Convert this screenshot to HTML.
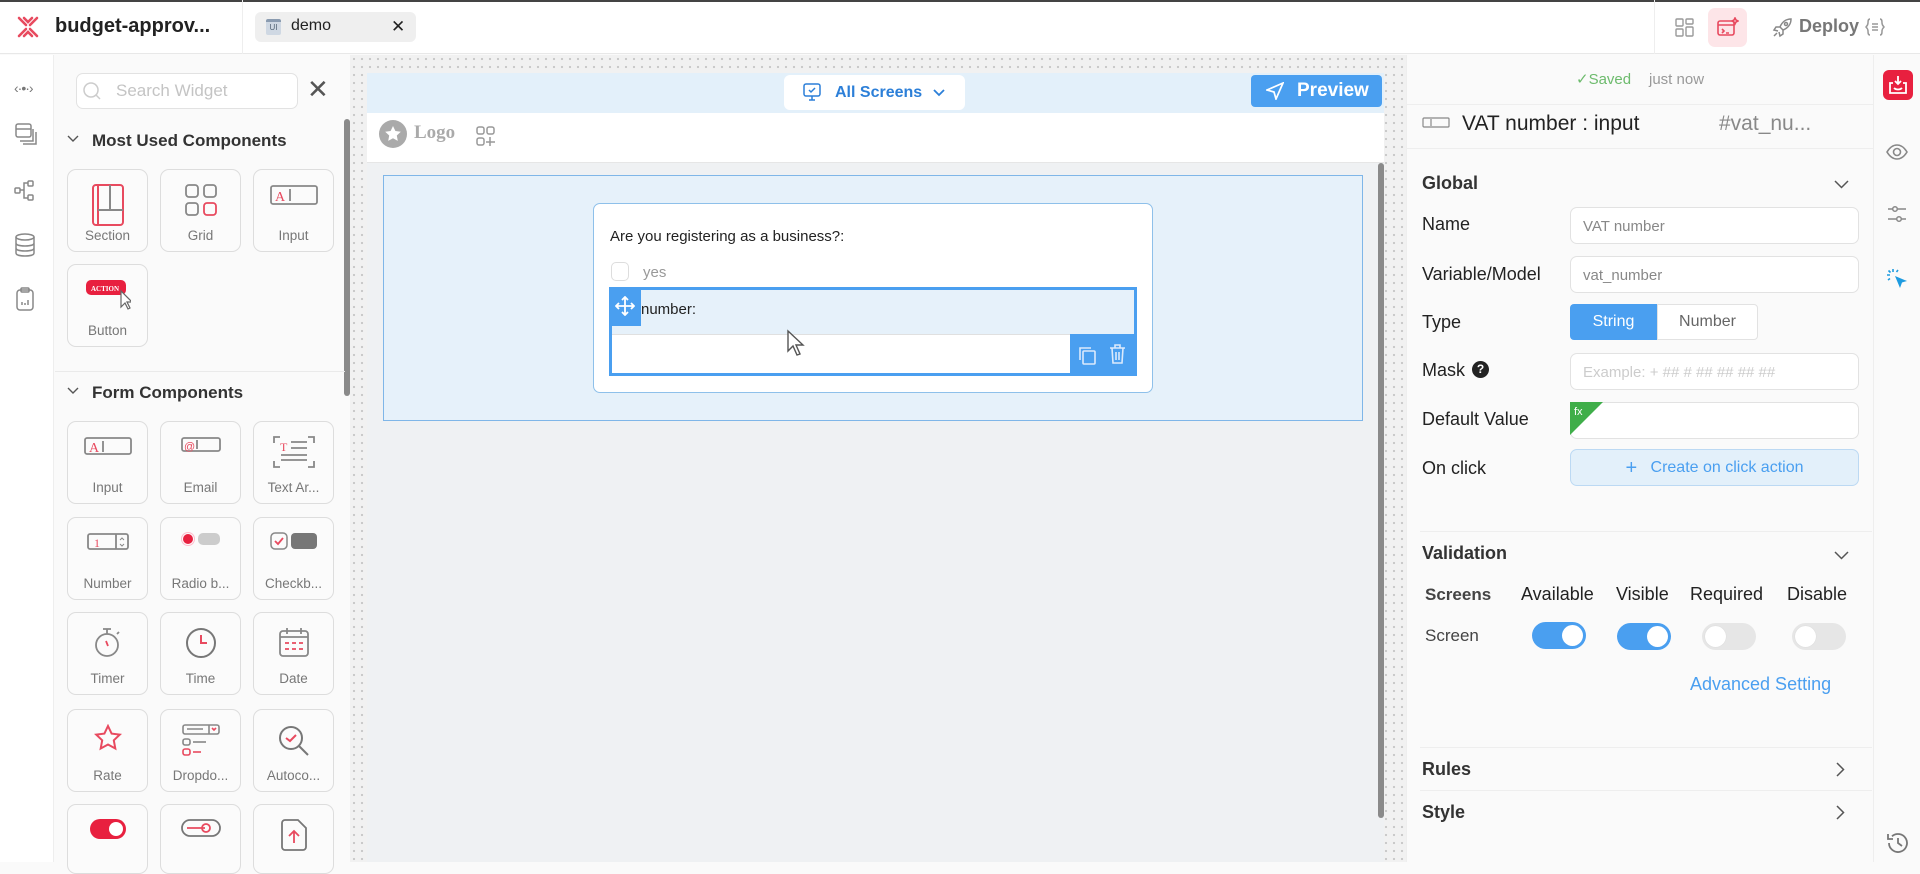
<!DOCTYPE html>
<html><head><meta charset="utf-8"><style>
*{box-sizing:border-box;margin:0;padding:0}
body{width:1920px;height:862px;overflow:hidden;background:#fafafa;font-family:"Liberation Sans",sans-serif;color:#222;position:relative}
.a{position:absolute}
.card{position:absolute;width:81px;height:83px;border:1px solid #ddd;border-radius:9px;background:#fbfbfb}
.card svg{position:absolute;left:50%;top:14px;transform:translateX(-50%)}
.card span{position:absolute;left:0;right:0;top:58px;text-align:center;font-size:13.5px;color:#777;white-space:nowrap}
.lbl{position:absolute;left:1422px;font-size:18px;color:#222}
.inp{position:absolute;left:1570px;width:289px;height:37px;border:1px solid #e2e2e2;border-radius:7px;background:#fff;font-size:15px;color:#888;padding:10px 12px}
.tg{position:absolute;width:54px;height:27px;border-radius:14px}
.tg.on{background:#4a9ff0}.tg.off{background:#e6e6e6}
.tg i{position:absolute;top:3px;width:21px;height:21px;border-radius:50%;background:#fff}
.tg.on i{right:3px}.tg.off i{left:3px;box-shadow:0 0 1px #ccc}
.hd{position:absolute;left:1422px;font-size:18px;font-weight:bold;color:#333}
.hr{position:absolute;left:1420px;width:452px;height:1px;background:#eee}
</style></head><body>
<!-- top bar -->
<div class="a" style="left:0;top:0;width:1920px;height:54px;background:#fff;border-bottom:1px solid #e8e8e8;border-top:2px solid #444"></div>
<svg class="a" style="left:16px;top:15px" width="24" height="24" viewBox="0 0 24 24" fill="none" stroke="#e84a5f" stroke-width="2.6" stroke-linecap="round"><path d="M3 3l7 7M21 3l-7 7M3 21l7-7M21 21l-7-7M8 3l4 4 4-4M8 21l4-4 4 4"/></svg>
<div class="a" style="left:55px;top:15px;font-size:20px;font-weight:bold;color:#222">budget-approv...</div>
<div class="a" style="left:242px;top:0;width:1px;height:54px;background:#eee"></div>
<div class="a" style="left:255px;top:12px;width:161px;height:30px;background:#efefef;border-radius:6px"></div>
<div class="a" style="left:266px;top:19px;width:15px;height:16px;background:#cfd8e3;border-top:3px solid #8a9bb0;border-radius:2px;font-size:8px;color:#567;text-align:center;line-height:12px">UI</div>
<div class="a" style="left:291px;top:17px;font-size:16px;color:#222">demo</div>
<div class="a" style="left:391px;top:17px;font-size:17px;color:#222">✕</div>
<div class="a" style="left:1654px;top:0;width:1px;height:54px;background:#eee"></div>
<svg class="a" style="left:1675px;top:18px" width="19" height="19" viewBox="0 0 19 19" fill="none" stroke="#999" stroke-width="1.4"><rect x="1" y="1" width="7" height="7" rx="1"/><rect x="11" y="1" width="7" height="5" rx="1"/><rect x="1" y="11" width="7" height="7" rx="1"/><rect x="11" y="9" width="7" height="9" rx="1"/></svg>
<div class="a" style="left:1708px;top:8px;width:39px;height:39px;background:#fde5e8;border-radius:7px"></div>
<svg class="a" style="left:1717px;top:17px" width="22" height="20" viewBox="0 0 22 20" fill="none" stroke="#e84a5f" stroke-width="1.6"><rect x="1" y="4" width="16" height="14" rx="2"/><path d="M1 8h16M5 12l2 2-2 2M9 16h3"/><path d="M18 1l1 2 2 1-2 1-1 2-1-2-2-1 2-1z"/></svg>
<svg class="a" style="left:1772px;top:17px" width="21" height="21" viewBox="0 0 21 21" fill="none" stroke="#888" stroke-width="1.5"><path d="M19 2c-5 0-9 3-11 8l3 3c5-2 8-6 8-11zM8 10l-4 0-2 3 4 1M11 13l0 4-3 2-1-4M5 16l-3 3"/><circle cx="14" cy="7" r="1.5"/></svg>
<div class="a" style="left:1799px;top:16px;font-size:18px;font-weight:bold;color:#777">Deploy</div>
<svg class="a" style="left:1865px;top:17px" width="20" height="20" viewBox="0 0 20 20" fill="none" stroke="#999" stroke-width="1.5"><path d="M5 2C3 2 3 4 3 6s-2 4-2 4 2 2 2 4 0 4 2 4M15 2c2 0 2 2 2 4s2 4 2 4-2 2-2 4 0 4-2 4M7 7h6M7 10h6M7 13h6"/></svg>

<!-- left rail -->
<div class="a" style="left:0;top:55px;width:54px;height:807px;background:#fff;border-right:1px solid #eee"></div>
<div class="a" style="left:14px;top:80px;font-size:14px;color:#777;letter-spacing:-1px">‹·•·›</div>
<svg class="a" style="left:15px;top:123px" width="22" height="22" viewBox="0 0 22 22" fill="none" stroke="#888" stroke-width="1.5"><rect x="1" y="1" width="15" height="13" rx="2"/><path d="M1 6h15M5 18h13V6M8 21h13V9"/></svg>
<svg class="a" style="left:14px;top:180px" width="22" height="22" viewBox="0 0 22 22" fill="none" stroke="#888" stroke-width="1.5"><rect x="1" y="8" width="5" height="5" rx="1"/><rect x="14" y="1" width="5" height="5" rx="1"/><rect x="14" y="15" width="5" height="5" rx="1"/><path d="M6 10h4V3h4M10 10v8h4"/></svg>
<svg class="a" style="left:14px;top:233px" width="22" height="24" viewBox="0 0 22 24" fill="none" stroke="#888" stroke-width="1.5"><ellipse cx="11" cy="4" rx="9" ry="3"/><path d="M2 4v16c0 2 4 3 9 3s9-1 9-3V4M2 10c0 2 4 3 9 3s9-1 9-3M2 15c0 2 4 3 9 3s9-1 9-3"/></svg>
<svg class="a" style="left:16px;top:287px" width="18" height="24" viewBox="0 0 18 24" fill="none" stroke="#888" stroke-width="1.5"><rect x="1" y="3" width="16" height="20" rx="3"/><rect x="5" y="1" width="8" height="4" rx="1"/><path d="M6 18v-3M9 18v-2M12 18v-5"/></svg>

<!-- widget panel -->
<div class="a" style="left:55px;top:55px;width:295px;height:807px;background:#fafafa"></div>
<div class="a" style="left:76px;top:73px;width:222px;height:36px;border:1px solid #e2e2e2;border-radius:7px;background:#fff"></div>
<svg class="a" style="left:82px;top:81px" width="20" height="20" viewBox="0 0 20 20" fill="none" stroke="#ccc" stroke-width="1.5"><circle cx="9" cy="9" r="7"/><path d="M14 14l4 4"/></svg>
<div class="a" style="left:116px;top:81px;font-size:17px;color:#c4c4c4">Search Widget</div>
<div class="a" style="left:307px;top:74px;font-size:26px;color:#555;line-height:30px">✕</div>
<div class="a" style="left:344px;top:119px;width:6px;height:277px;background:#8a8a8a;border-radius:3px"></div>
<svg class="a" style="left:67px;top:135px" width="12" height="8" viewBox="0 0 12 8" fill="none" stroke="#555" stroke-width="1.4"><path d="M1 1l5 5 5-5"/></svg>
<div class="a" style="left:92px;top:131px;font-size:17px;font-weight:bold;color:#333">Most Used Components</div>

<div class="card" style="left:67px;top:169px"><svg width="32" height="42" viewBox="0 0 32 42" fill="none" stroke="#e84a5f" stroke-width="2"><rect x="1" y="1" width="30" height="40" rx="3"/><path d="M6 1v40M6 26h25M18 1v25" stroke="#e84a5f"/><path d="M18 1v25M6 26h25" stroke="#888"/></svg><span>Section</span></div>
<div class="card" style="left:160px;top:169px"><svg width="32" height="32" viewBox="0 0 32 32" fill="none" stroke-width="1.8"><rect x="1" y="1" width="12" height="12" rx="3" stroke="#888"/><rect x="19" y="1" width="12" height="12" rx="3" stroke="#888"/><rect x="1" y="19" width="12" height="12" rx="3" stroke="#888"/><rect x="19" y="19" width="12" height="12" rx="3" stroke="#e84a5f"/></svg><span>Grid</span></div>
<div class="card" style="left:253px;top:169px"><svg width="48" height="22" viewBox="0 0 48 22" fill="none" stroke="#888" stroke-width="1.8"><rect x="1" y="2" width="46" height="18" rx="2"/><text x="5" y="17" font-size="14" fill="#e84a5f" stroke="none" font-family="Liberation Serif">A</text><path d="M20 5v12"/></svg><span>Input</span></div>
<div class="card" style="left:67px;top:264px"><svg width="46" height="36" viewBox="0 0 46 36" fill="none"><rect x="1" y="1" width="40" height="15" rx="5" fill="#e8203f"/><text x="6" y="12" font-size="7" font-weight="bold" fill="#fff" font-family="Liberation Serif">ACTION</text><path d="M36 12l0 16 4-4 3 6 2-1-3-6 5 0z" fill="#fff" stroke="#666" stroke-width="1.2"/></svg><span>Button</span></div>

<div class="a" style="left:55px;top:371px;width:290px;height:1px;background:#eaeaea"></div>
<svg class="a" style="left:67px;top:387px" width="12" height="8" viewBox="0 0 12 8" fill="none" stroke="#555" stroke-width="1.4"><path d="M1 1l5 5 5-5"/></svg>
<div class="a" style="left:92px;top:383px;font-size:17px;font-weight:bold;color:#333">Form Components</div>

<div class="card" style="left:67px;top:421px"><svg width="48" height="22" viewBox="0 0 48 22" fill="none" stroke="#888" stroke-width="1.8"><rect x="1" y="2" width="46" height="16" rx="2"/><text x="5" y="16" font-size="14" fill="#e84a5f" stroke="none" font-family="Liberation Serif">A</text><path d="M19 5v11"/></svg><span>Input</span></div>
<div class="card" style="left:160px;top:421px"><svg width="40" height="18" viewBox="0 0 40 18" fill="none" stroke="#888" stroke-width="1.8"><rect x="1" y="2" width="38" height="13" rx="2"/><text x="3" y="14" font-size="11" fill="#e84a5f" stroke="none">@</text><path d="M16 4v9"/></svg><span>Email</span></div>
<div class="card" style="left:253px;top:421px"><svg width="42" height="32" viewBox="0 0 42 32" fill="none" stroke="#888" stroke-width="1.8"><path d="M1 7V1h6M35 1h6v6M1 25v6h6M35 31h6v-6M18 6h16M18 12h16M8 19h26M8 24h26"/><text x="7" y="15" font-size="12" fill="#e84a5f" stroke="none" font-family="Liberation Serif">T</text></svg><span>Text Ar...</span></div>

<div class="card" style="left:67px;top:517px"><svg width="42" height="20" viewBox="0 0 42 20" fill="none" stroke="#888" stroke-width="1.8"><rect x="1" y="2" width="40" height="15" rx="2"/><path d="M29 2v15"/><text x="7" y="15" font-size="12" fill="#e84a5f" stroke="none" font-family="Liberation Serif">1</text><path d="M33 8l2-2 2 2M33 12l2 2 2-2" stroke-width="1"/></svg><span>Number</span></div>
<div class="card" style="left:160px;top:517px"><svg width="40" height="14" viewBox="0 0 40 14"><circle cx="7" cy="7" r="5" fill="#e8203f"/><circle cx="7" cy="7" r="6.5" fill="none" stroke="#fbc" stroke-width="1"/><rect x="17" y="1" width="22" height="12" rx="5" fill="#ccc"/></svg><span>Radio b...</span></div>
<div class="card" style="left:253px;top:517px"><svg width="48" height="18" viewBox="0 0 48 18"><rect x="1" y="1" width="16" height="16" rx="4" fill="none" stroke="#888" stroke-width="1.5"/><path d="M5 9l3 3 5-6" fill="none" stroke="#e84a5f" stroke-width="1.8"/><rect x="21" y="1" width="26" height="16" rx="4" fill="#777"/></svg><span>Checkb...</span></div>

<div class="card" style="left:67px;top:612px"><svg width="28" height="32" viewBox="0 0 28 32" fill="none" stroke="#888" stroke-width="1.8"><circle cx="13" cy="18" r="11"/><path d="M9 2h8M13 2v5M23 7l2-2"/><path d="M12 14l2 5" stroke="#e84a5f"/></svg><span>Timer</span></div>
<div class="card" style="left:160px;top:612px"><svg width="32" height="32" viewBox="0 0 32 32" fill="none" stroke-width="2"><circle cx="16" cy="16" r="14" stroke="#777"/><path d="M16 8v8h6" stroke="#e84a5f"/></svg><span>Time</span></div>
<div class="card" style="left:253px;top:612px"><svg width="30" height="30" viewBox="0 0 30 30" fill="none" stroke="#888" stroke-width="1.8"><rect x="1" y="4" width="28" height="25" rx="3"/><path d="M1 10h28M8 1v6M22 1v6"/><path d="M6 16h4M13 16h4M20 16h4M6 22h4M13 22h4M20 22h4" stroke="#e84a5f"/></svg><span>Date</span></div>

<div class="card" style="left:67px;top:709px"><svg width="28" height="28" viewBox="0 0 28 28" fill="none" stroke="#e84a5f" stroke-width="2"><path d="M14 2l3.6 7.6 8.2 1-6 5.7 1.5 8.2L14 20.5l-7.3 4 1.5-8.2-6-5.7 8.2-1z"/></svg><span>Rate</span></div>
<div class="card" style="left:160px;top:709px"><svg width="38" height="34" viewBox="0 0 38 34" fill="none" stroke="#888" stroke-width="1.6"><rect x="1" y="1" width="36" height="9" rx="2"/><path d="M27 1v9M5 5h16"/><path d="M30 4l2 2 2-2" stroke="#e84a5f"/><rect x="1" y="15" width="7" height="6" rx="2"/><path d="M11 18h13"/><rect x="1" y="25" width="7" height="6" rx="2" stroke="#e84a5f"/><path d="M11 28h8" stroke="#e84a5f"/></svg><span>Dropdo...</span></div>
<div class="card" style="left:253px;top:709px"><svg width="34" height="34" viewBox="0 0 34 34" fill="none" stroke-width="2"><circle cx="14" cy="14" r="11" stroke="#777"/><path d="M22 22l9 9" stroke="#777"/><path d="M9 14l4 3 6-6" stroke="#e84a5f"/></svg><span>Autoco...</span></div>

<div class="card" style="left:67px;top:804px;height:70px"><svg width="36" height="20" viewBox="0 0 36 20"><rect x="0" y="0" width="36" height="20" rx="10" fill="#e8203f"/><circle cx="26" cy="10" r="7" fill="#fff"/></svg></div>
<div class="card" style="left:160px;top:804px;height:70px"><svg width="40" height="18" viewBox="0 0 40 18" fill="none" stroke="#777" stroke-width="1.8"><rect x="1" y="1" width="38" height="16" rx="8"/><path d="M6 9h18" stroke="#e84a5f"/><circle cx="25" cy="9" r="4" stroke="#e84a5f"/></svg></div>
<div class="card" style="left:253px;top:804px;height:70px"><svg width="26" height="32" viewBox="0 0 26 32" fill="none" stroke="#777" stroke-width="1.8"><path d="M4 1h13l8 8v19a3 3 0 0 1-3 3H4a3 3 0 0 1-3-3V4a3 3 0 0 1 3-3z"/><path d="M13 24V12M8 17l5-5 5 5" stroke="#e84a5f"/></svg></div>

<!-- canvas -->
<div class="a" style="left:350px;top:55px;width:1056px;height:807px;background-color:#f1f1f1;background-image:radial-gradient(#c8c8c8 1px,transparent 1.3px);background-size:8px 8px"></div>
<div class="a" style="left:367px;top:73px;width:1017px;height:789px;background:#eff1f3"></div>
<div class="a" style="left:367px;top:73px;width:1017px;height:40px;background:#e3f0fa"></div>
<div class="a" style="left:784px;top:75px;width:181px;height:35px;background:#fff;border-radius:6px"></div>
<svg class="a" style="left:803px;top:83px" width="18" height="18" viewBox="0 0 18 18" fill="none" stroke="#2c7fd8" stroke-width="1.5"><rect x="1" y="1" width="16" height="12" rx="2"/><path d="M6 17h6M9 13v4M6 7l2 2 4-4"/></svg>
<div class="a" style="left:835px;top:84px;font-size:16px;font-weight:bold;color:#2c7fd8">All Screens</div>
<svg class="a" style="left:933px;top:89px" width="12" height="8" viewBox="0 0 12 8" fill="none" stroke="#2c7fd8" stroke-width="1.8"><path d="M1 1l5 5 5-5"/></svg>
<div class="a" style="left:1251px;top:75px;width:131px;height:32px;background:#4a9ff0;border-radius:4px"></div>
<svg class="a" style="left:1266px;top:82px" width="18" height="18" viewBox="0 0 18 18" fill="none" stroke="#fff" stroke-width="1.7"><path d="M17 1L1 8l7 2 2 7z"/></svg>
<div class="a" style="left:1297px;top:80px;font-size:19px;font-weight:bold;color:#fff">Preview</div>
<div class="a" style="left:367px;top:113px;width:1017px;height:50px;background:#fff;border-bottom:1px solid #e6e6e6"></div>
<svg class="a" style="left:379px;top:120px" width="28" height="28" viewBox="0 0 28 28"><circle cx="14" cy="14" r="14" fill="#aaa"/><path d="M14 6l2.4 5 5.4.7-4 3.8 1 5.4-4.8-2.6-4.8 2.6 1-5.4-4-3.8 5.4-.7z" fill="#fff"/></svg>
<div class="a" style="left:414px;top:122px;font-size:19px;font-weight:bold;color:#aaa;font-family:'Liberation Serif',serif">Logo</div>
<svg class="a" style="left:476px;top:126px" width="20" height="22" viewBox="0 0 20 22" fill="none" stroke="#999" stroke-width="1.5"><rect x="1" y="1" width="7" height="7" rx="2"/><rect x="11" y="1" width="7" height="7" rx="2"/><rect x="1" y="12" width="7" height="7" rx="2"/><path d="M14 11v9M10 16h9"/></svg>
<div class="a" style="left:1378px;top:163px;width:6px;height:655px;background:#8a8a8a;border-radius:3px"></div>

<div class="a" style="left:383px;top:175px;width:980px;height:246px;background:#e6f1fa;border:1px solid #7fb6e8"></div>
<div class="a" style="left:593px;top:203px;width:560px;height:190px;background:#fff;border:1.5px solid #8ec0ea;border-radius:7px"></div>
<div class="a" style="left:610px;top:228px;font-size:15px;color:#222">Are you registering as a business?:</div>
<div class="a" style="left:611px;top:262px;width:18px;height:19px;border:1px solid #ddd;border-radius:5px"></div>
<div class="a" style="left:643px;top:264px;font-size:15px;color:#999">yes</div>
<div class="a" style="left:609px;top:287px;width:528px;height:89px;border:3px solid #4a9ff0;background:#e6f1fa"></div>
<div class="a" style="left:612px;top:334px;width:458px;height:39px;background:#fff;border-top:1px solid #e0e0e0"></div>
<div class="a" style="left:609px;top:287px;width:32px;height:39px;background:#4a9ff0"></div>
<svg class="a" style="left:615px;top:296px" width="20" height="20" viewBox="0 0 20 20" fill="none" stroke="#fff" stroke-width="1.8"><path d="M10 1v18M1 10h18M7 4l3-3 3 3M7 16l3 3 3-3M4 7l-3 3 3 3M16 7l3 3-3 3"/></svg>
<div class="a" style="left:641px;top:301px;font-size:15px;color:#222">number:</div>
<div class="a" style="left:1070px;top:334px;width:66px;height:41px;background:#4a9ff0"></div>
<svg class="a" style="left:1077px;top:345px" width="20" height="20" viewBox="0 0 20 20" fill="none" stroke="#dbeafc" stroke-width="1.6"><rect x="6" y="6" width="12" height="13" rx="1"/><path d="M3 15V3h11"/></svg>
<svg class="a" style="left:1109px;top:344px" width="17" height="20" viewBox="0 0 17 20" fill="none" stroke="#dbeafc" stroke-width="1.6"><path d="M1 4h15M6 4V1h5v3M3 4l1 15h9l1-15M7 8v8M10 8v8"/></svg>
<svg class="a" style="left:786px;top:329px" width="20" height="28" viewBox="0 0 20 28"><path d="M2 2v20l5-5 4 9 3-1-4-9h7z" fill="#fff" stroke="#555" stroke-width="1.4"/></svg>

<!-- right panel -->
<div class="a" style="left:1406px;top:55px;width:467px;height:807px;background:#fafafa;border-left:1px solid #eee"></div>
<div class="a" style="left:1576px;top:70px;font-size:15px;color:#6dbb6d">✓Saved</div>
<div class="a" style="left:1649px;top:71px;font-size:15px;color:#999">just now</div>
<div class="a" style="left:1406px;top:104px;width:467px;height:1px;background:#eee"></div>
<svg class="a" style="left:1422px;top:117px" width="28" height="12" viewBox="0 0 28 12" fill="none" stroke="#888" stroke-width="1.2"><rect x="1" y="1" width="26" height="9" rx="1"/><path d="M9 2v7"/></svg>
<div class="a" style="left:1462px;top:112px;font-size:21px;color:#222">VAT number : input</div>
<div class="a" style="left:1719px;top:112px;font-size:21px;color:#888">#vat_nu...</div>
<div class="a" style="left:1406px;top:148px;width:467px;height:1px;background:#eee"></div>
<div class="hd" style="top:173px">Global</div>
<svg class="a" style="left:1834px;top:180px" width="15" height="9" viewBox="0 0 15 9" fill="none" stroke="#555" stroke-width="1.5"><path d="M1 1l6.5 6.5L14 1"/></svg>
<div class="lbl" style="top:214px">Name</div><div class="inp" style="top:207px">VAT number</div>
<div class="lbl" style="top:264px">Variable/Model</div><div class="inp" style="top:256px">vat_number</div>
<div class="lbl" style="top:312px">Type</div>
<div class="a" style="left:1570px;top:304px;width:87px;height:36px;background:#4a9ff0;border-radius:4px 0 0 4px;color:#fff;font-size:16px;text-align:center;line-height:36px">String</div>
<div class="a" style="left:1657px;top:304px;width:101px;height:36px;background:#fff;border:1px solid #e2e2e2;border-radius:0 4px 4px 0;color:#666;font-size:16px;text-align:center;line-height:34px">Number</div>
<div class="lbl" style="top:360px">Mask</div>
<div class="a" style="left:1472px;top:361px;width:17px;height:17px;border-radius:50%;background:#222;color:#fff;font-size:12px;font-weight:bold;text-align:center;line-height:17px">?</div>
<div class="inp" style="top:353px;color:#ccc">Example: + ## # ## ## ## ##</div>
<div class="lbl" style="top:409px">Default Value</div><div class="inp" style="top:402px"></div>
<svg class="a" style="left:1570px;top:402px" width="34" height="34" viewBox="0 0 34 34"><path d="M0 0h33L0 33z" fill="#3fae49"/><text x="4" y="13" font-size="11" fill="#fff">fx</text></svg>
<div class="lbl" style="top:458px">On click</div>
<div class="a" style="left:1570px;top:449px;width:289px;height:37px;background:#e3f0fa;border:1px solid #bcd9f3;border-radius:7px;color:#4a9ff0;font-size:16px;text-align:center;line-height:35px"><span style="font-size:20px;vertical-align:-2px">+</span>&nbsp;&nbsp; Create on click action</div>
<div class="hr" style="top:531px"></div>
<div class="hd" style="top:543px">Validation</div>
<svg class="a" style="left:1834px;top:551px" width="15" height="9" viewBox="0 0 15 9" fill="none" stroke="#555" stroke-width="1.5"><path d="M1 1l6.5 6.5L14 1"/></svg>
<div class="a" style="left:1425px;top:585px;font-size:17px;font-weight:bold;color:#444">Screens</div>
<div class="a" style="left:1521px;top:584px;font-size:18px;color:#222">Available</div>
<div class="a" style="left:1616px;top:584px;font-size:18px;color:#222">Visible</div>
<div class="a" style="left:1690px;top:584px;font-size:18px;color:#222">Required</div>
<div class="a" style="left:1787px;top:584px;font-size:18px;color:#222">Disable</div>
<div class="a" style="left:1425px;top:626px;font-size:17px;color:#444">Screen</div>
<div class="tg on" style="left:1532px;top:622px"><i></i></div>
<div class="tg on" style="left:1617px;top:623px"><i></i></div>
<div class="tg off" style="left:1702px;top:623px"><i></i></div>
<div class="tg off" style="left:1792px;top:623px"><i></i></div>
<div class="a" style="left:1690px;top:674px;font-size:18px;color:#4a9ff0">Advanced Setting</div>
<div class="hr" style="top:747px"></div>
<div class="hd" style="top:759px">Rules</div>
<svg class="a" style="left:1836px;top:762px" width="9" height="15" viewBox="0 0 9 15" fill="none" stroke="#555" stroke-width="1.5"><path d="M1 1l6.5 6.5L1 14"/></svg>
<div class="hr" style="top:790px"></div>
<div class="hd" style="top:802px">Style</div>
<svg class="a" style="left:1836px;top:805px" width="9" height="15" viewBox="0 0 9 15" fill="none" stroke="#555" stroke-width="1.5"><path d="M1 1l6.5 6.5L1 14"/></svg>

<!-- right rail -->
<div class="a" style="left:1873px;top:55px;width:47px;height:807px;background:#fafafa;border-left:1px solid #eee"></div>
<div class="a" style="left:1883px;top:70px;width:30px;height:30px;background:#e8203f;border-radius:6px"></div>
<svg class="a" style="left:1888px;top:75px" width="20" height="20" viewBox="0 0 20 20" fill="none" stroke="#fff" stroke-width="1.8"><path d="M10 1v8M7 6l3 3 3-3M5 8H2v10h16V8h-3M6 13c2 2 6 2 8 0"/></svg>
<svg class="a" style="left:1886px;top:144px" width="22" height="16" viewBox="0 0 22 16" fill="none" stroke="#888" stroke-width="1.6"><path d="M1 8c3-5 6-7 10-7s7 2 10 7c-3 5-6 7-10 7S4 13 1 8z"/><circle cx="11" cy="8" r="3.5"/></svg>
<svg class="a" style="left:1887px;top:205px" width="20" height="18" viewBox="0 0 20 18" fill="none" stroke="#888" stroke-width="1.5"><path d="M1 4h5M11 4h8M1 14h8M14 14h5"/><circle cx="8" cy="4" r="2.3"/><circle cx="12" cy="14" r="2.3"/></svg>
<svg class="a" style="left:1886px;top:268px" width="22" height="22" viewBox="0 0 22 22"><path d="M9 8l12 5-5 1.5L14 20z" fill="#1e9be0"/><path d="M7 1v3M1 7h3M2.5 2.5l2 2M2 12l2-1.5M12 2l-1.5 2" stroke="#1e9be0" stroke-width="1.6"/></svg>
<svg class="a" style="left:1886px;top:831px" width="24" height="24" viewBox="0 0 24 24" fill="none" stroke="#777" stroke-width="1.8"><path d="M3 12a9 9 0 1 0 3-6.7"/><path d="M2 3v5h5"/><path d="M12 7v5l4 3"/></svg>
</body></html>
